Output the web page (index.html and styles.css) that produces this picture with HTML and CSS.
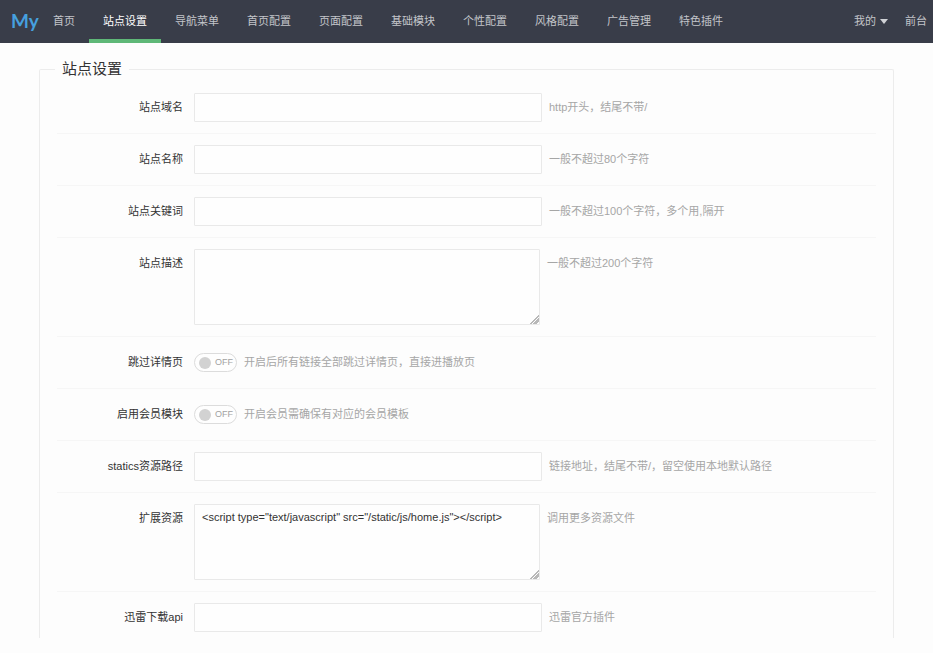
FILE: index.html
```html
<!DOCTYPE html>
<html lang="zh-CN">
<head>
<meta charset="utf-8">
<title>站点设置</title>
<link rel="stylesheet" href="styles.css">
</head>
<body>
<header class="topbar">
  <a class="logo" href="#">My</a>
  <nav class="nav">
    <a class="nav-item" href="#">首页</a>
    <a class="nav-item is-active" href="#">站点设置</a>
    <a class="nav-item" href="#">导航菜单</a>
    <a class="nav-item" href="#">首页配置</a>
    <a class="nav-item" href="#">页面配置</a>
    <a class="nav-item" href="#">基础模块</a>
    <a class="nav-item" href="#">个性配置</a>
    <a class="nav-item" href="#">风格配置</a>
    <a class="nav-item" href="#">广告管理</a>
    <a class="nav-item" href="#">特色插件</a>
  </nav>
  <nav class="nav-side">
    <a class="nav-link" href="#">我的<span class="caret"></span></a>
    <a class="nav-link" href="#">前台</a>
  </nav>
</header>
<main class="page">
  <form>
    <fieldset class="panel">
      <legend class="panel-title">站点设置</legend>
      <div class="row">
        <label class="label" for="domain">站点域名</label>
        <input class="field" id="domain" type="text">
        <span class="hint">http开头，结尾不带/</span>
      </div>
      <div class="row">
        <label class="label" for="name">站点名称</label>
        <input class="field" id="name" type="text">
        <span class="hint">一般不超过80个字符</span>
      </div>
      <div class="row">
        <label class="label" for="keywords">站点关键词</label>
        <input class="field" id="keywords" type="text">
        <span class="hint">一般不超过100个字符，多个用,隔开</span>
      </div>
      <div class="row">
        <label class="label" for="description">站点描述</label>
        <textarea class="field field-area" id="description"></textarea>
        <span class="hint">一般不超过200个字符</span>
      </div>
      <div class="row">
        <label class="label" for="skip">跳过详情页</label>
        <label class="switch"><input class="switch-dot" id="skip" type="checkbox">OFF</label>
        <span class="hint">开启后所有链接全部跳过详情页，直接进播放页</span>
      </div>
      <div class="row">
        <label class="label" for="member">启用会员模块</label>
        <label class="switch"><input class="switch-dot" id="member" type="checkbox">OFF</label>
        <span class="hint">开启会员需确保有对应的会员模板</span>
      </div>
      <div class="row">
        <label class="label" for="statics">statics资源路径</label>
        <input class="field" id="statics" type="text">
        <span class="hint">链接地址，结尾不带/，留空使用本地默认路径</span>
      </div>
      <div class="row">
        <label class="label" for="extend">扩展资源</label>
        <textarea class="field field-area" id="extend" spellcheck="false">&lt;script type="text/javascript" src="/static/js/home.js"&gt;&lt;/script&gt;</textarea>
        <span class="hint">调用更多资源文件</span>
      </div>
      <div class="row">
        <label class="label" for="xunlei">迅雷下载api</label>
        <input class="field" id="xunlei" type="text">
        <span class="hint">迅雷官方插件</span>
      </div>
    </fieldset>
  </form>
</main>
</body>
</html>
```
FILE: styles.css
```css
* {
  box-sizing: border-box;
}

body {
  margin: 0;
  background: #fdfdfd;
  color: #333;
  font: 11px/29px "Liberation Sans", "Noto Sans CJK SC", sans-serif;
}

a {
  color: inherit;
  text-decoration: none;
}

.topbar {
  display: flex;
  height: 43px;
  padding: 0 6px 0 11px;
  background: #393d49;
  color: #c3c5c9;
  line-height: 42px;
  white-space: nowrap;
}

.logo {
  width: 28px;
  color: #46a0de;
  font: 700 19px/42px Lato, sans-serif;
}

.nav {
  display: flex;
}

.nav-item {
  padding: 0 14px;
}

.nav-item.is-active {
  box-shadow: inset 0 -4px #5fb878;
  color: #fff;
}

.nav-side {
  display: flex;
  gap: 17px;
  margin-left: auto;
}

.nav-link {
  display: flex;
  align-items: center;
  gap: 4px;
  height: 42px;
}

.caret {
  border: 4px solid transparent;
  border-top: 5px solid #d0d2d6;
  border-bottom: 0;
}

.page {
  padding: 17px 39px 0;
}

.panel {
  min-width: 0;
  margin: 0;
  padding: 4px 17px 0;
  border: 1px solid #ececec;
  border-bottom: 0;
  border-radius: 2px 2px 0 0;
}

.panel-title {
  margin-left: -2px;
  padding: 0 7px;
  font-size: 15px;
  line-height: 18px;
}

.row {
  display: flex;
  align-items: flex-start;
  padding: 11px 0;
  border-bottom: 1px solid #f6f6f6;
}

.row:last-child {
  padding-bottom: 6px;
  border-bottom: 0;
}

.label {
  flex: none;
  width: 137px;
  padding-right: 11px;
  text-align: right;
}

.field {
  width: 348px;
  height: 29px;
  margin: 0;
  padding: 0 7px;
  border: 1px solid #e9e9e9;
  border-radius: 1px;
  outline: 0;
  background: #fefefe;
  color: #333;
  font: inherit;
}

.field-area {
  width: 346px;
  height: 76px;
  padding: 4px 7px;
  line-height: 16px;
  resize: vertical;
}

.field-area::-webkit-resizer {
  background: linear-gradient(135deg, transparent 70%, #b8b8b8 70% 74%, transparent 74% 79%, #b8b8b8 79% 92%, transparent 92%);
}

.hint {
  padding-left: 7px;
  color: #a6a6a6;
}

.switch {
  display: flex;
  align-items: center;
  gap: 4px;
  width: 43px;
  height: 19px;
  margin: 5px 0;
  padding-left: 4px;
  border: 1px solid #dcdcdc;
  border-radius: 10px;
  background: #fefefe;
  color: #a2a2a2;
  font-size: 9px;
  line-height: 17px;
}

.switch-dot {
  appearance: none;
  width: 12px;
  height: 12px;
  margin: 0;
  border-radius: 50%;
  background: #d2d2d2;
}
```
